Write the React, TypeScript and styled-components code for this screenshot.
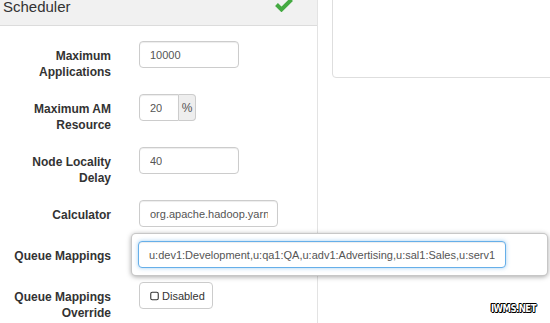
import * as React from 'react';
import styled, { createGlobalStyle, css } from 'styled-components';

const Global = createGlobalStyle`
  html, body {
    margin: 0;
    padding: 0;
    background: #fff;
    overflow: hidden;
  }
  body {
    font-family: "Liberation Sans", Arial, Helvetica, sans-serif;
    color: #333;
  }
`;

const Page = styled.div`
  position: relative;
  display: flex;
  width: 550px;
  height: 323px;
  overflow: hidden;
`;

const Panel = styled.div`
  width: 317px;
  flex: none;
  border-right: 1px solid #e3e3e3;
`;

const Header = styled.div`
  display: flex;
  justify-content: space-between;
  align-items: flex-start;
  height: 25px;
  padding: 0 24px 0 3px;
  background: #f1f1f1;
  border-bottom: 1px solid #dcdcdc;
  font-size: 15px;
  line-height: 15px;
  color: #333;
`;

const Title = styled.span`
  margin-top: -1px;
`;

const Check = styled.svg`
  margin-top: -3px;
  display: block;
`;

const Body = styled.div`
  padding-top: 15px;
`;

const Row = styled.div`
  display: flex;
  align-items: flex-start;
  margin-bottom: 14px;
`;

const Label = styled.div`
  width: 111px;
  flex: none;
  padding-top: 7px;
  text-align: right;
  font-size: 12px;
  font-weight: bold;
  line-height: 16px;
  color: #333;
`;

const Field = styled.div`
  position: relative;
  margin-left: 28px;
  display: flex;
`;

const Input = styled.div<{ $w: number; $focus?: boolean; $left?: boolean }>`
  box-sizing: border-box;
  width: ${(p) => p.$w}px;
  height: 27px;
  padding: 0 9px 0 10px;
  display: flex;
  align-items: center;
  font-size: 11px;
  color: #555;
  background: #fff;
  border: 1px solid #ccc;
  border-radius: ${(p) => (p.$left ? '4px 0 0 4px' : '4px')};
  box-shadow: inset 0 1px 1px rgba(0, 0, 0, 0.075);
  ${(p) =>
    p.$focus &&
    css`
      border-color: #66afe9;
      box-shadow: inset 0 1px 1px rgba(0, 0, 0, 0.075), 0 0 4px rgba(102, 175, 233, 0.6);
    `}
`;

const Value = styled.span`
  display: block;
  white-space: nowrap;
  overflow: hidden;
`;

const Addon = styled.div`
  box-sizing: border-box;
  width: 17px;
  height: 27px;
  display: flex;
  align-items: center;
  justify-content: center;
  font-size: 12px;
  color: #555;
  background: #eee;
  border: 1px solid #ccc;
  border-left: none;
  border-radius: 0 4px 4px 0;
`;

const Slot = styled.div`
  width: 368px;
  height: 27px;
`;

const Popover = styled.div`
  position: absolute;
  left: -8px;
  top: -8px;
  width: 417px;
  box-sizing: border-box;
  padding: 7px 41px 7px 6px;
  background: #fff;
  border: 1px solid rgba(0, 0, 0, 0.22);
  border-radius: 5px;
  box-shadow: 0 1px 5px rgba(0, 0, 0, 0.35);
  z-index: 2;
`;

const Toggle = styled.div`
  box-sizing: border-box;
  height: 27px;
  width: 74px;
  display: flex;
  align-items: center;
  gap: 3px;
  padding-left: 10px;
  font-size: 11px;
  color: #333;
  background: #fff;
  border: 1px solid #ccc;
  border-radius: 4px;
`;

const Side = styled.div`
  flex: 1;
  padding-left: 14px;
`;

const Card = styled.div`
  margin-top: -6px;
  margin-right: -20px;
  height: 82px;
  border: 1px solid #dedede;
  border-radius: 4px;
`;

const Mark = styled.div`
  position: absolute;
  right: 14px;
  bottom: 9px;
  font-family: "DejaVu Sans", sans-serif;
  font-weight: bold;
  font-size: 10px;
  letter-spacing: -0.6px;
  color: #fff;
  text-shadow: 1px 0 0 #000, -1px 0 0 #000, 0 1px 0 #000, 0 -1px 0 #000, 1px 1px 0 #000, -1px -1px 0 #000;
  line-height: 10px;
  transform: scaleX(0.85);
  transform-origin: right center;
`;

const Square = () => (
  <svg width="9" height="10" viewBox="0 0 9 10">
    <rect x="0.75" y="1.25" width="7.5" height="7.5" rx="1.5" fill="none" stroke="#333" strokeWidth="1.1" />
  </svg>
);

export default function App() {
  return (
    <Page>
      <Global />
      <Panel>
        <Header>
          <Title>Scheduler</Title>
          <Check width="18" height="15" viewBox="0 0 18 15">
            <path d="M1.5 7.5 L6.5 12.5 L16.5 2.5" fill="none" stroke="#45aa42" strokeWidth="4" />
          </Check>
        </Header>
        <Body>
          <Row>
            <Label>Maximum<br />Applications</Label>
            <Field><Input $w={100}><Value>10000</Value></Input></Field>
          </Row>
          <Row>
            <Label>Maximum AM<br />Resource</Label>
            <Field>
              <Input $w={40} $left><Value>20</Value></Input>
              <Addon>%</Addon>
            </Field>
          </Row>
          <Row>
            <Label>Node Locality<br />Delay</Label>
            <Field><Input $w={100}><Value>40</Value></Input></Field>
          </Row>
          <Row>
            <Label>Calculator</Label>
            <Field>
              <Input $w={139}>
                <Value>org.apache.hadoop.yarn</Value>
              </Input>
            </Field>
          </Row>
          <Row>
            <Label>Queue Mappings</Label>
            <Field>
              <Slot />
              <Popover>
                <Input $w={368} $focus>
                  <Value>u:dev1:Development,u:qa1:QA,u:adv1:Advertising,u:sal1:Sales,u:serv1</Value>
                </Input>
              </Popover>
            </Field>
          </Row>
          <Row>
            <Label>Queue Mappings<br />Override</Label>
            <Field>
              <Toggle><Square />Disabled</Toggle>
            </Field>
          </Row>
        </Body>
      </Panel>
      <Side>
        <Card />
      </Side>
      <Mark>IWMS.NET</Mark>
    </Page>
  );
}
